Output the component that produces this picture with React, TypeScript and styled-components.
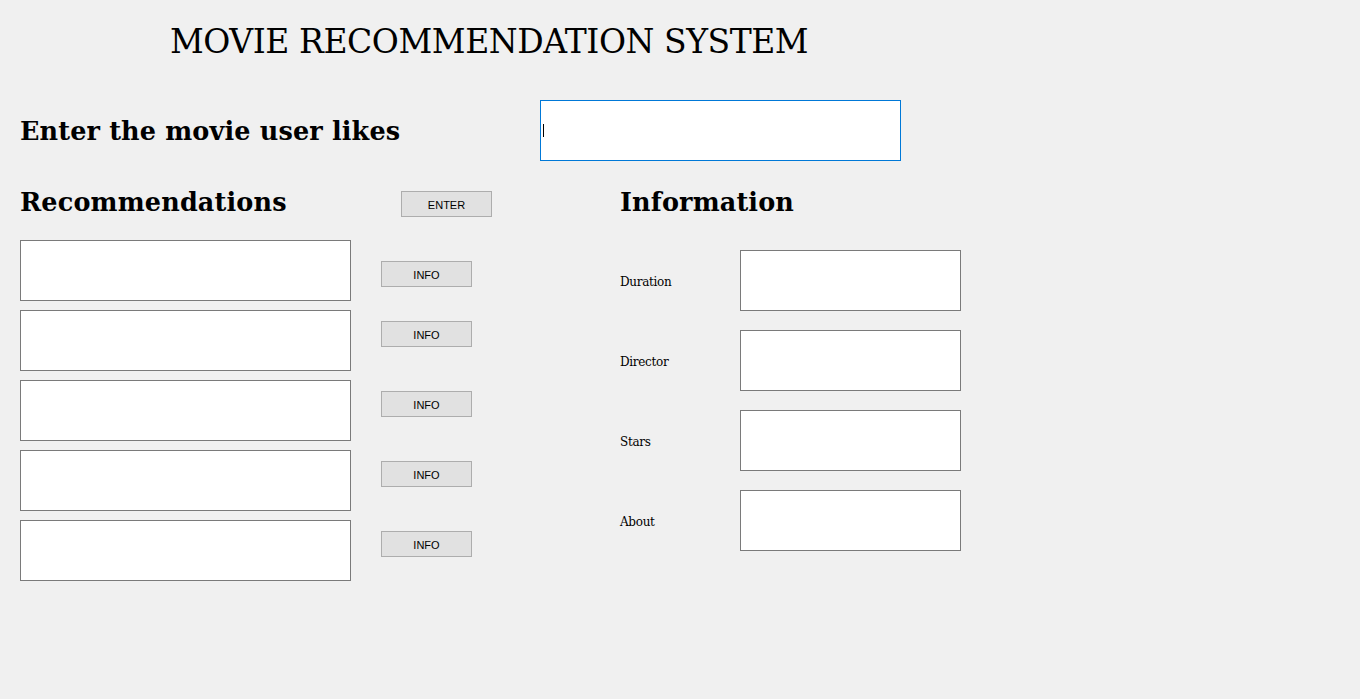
import styled, { createGlobalStyle } from "styled-components";

const GlobalStyle = createGlobalStyle`
  html, body {
    margin: 0;
    padding: 0;
    background: #f0f0f0;
  }
  body {
    width: 1360px;
    height: 699px;
    overflow: hidden;
    font-family: "DejaVu Serif", "Liberation Serif", serif;
    color: #000;
  }
`;

const Form = styled.div`
  width: 1360px;
  height: 699px;
  background: #f0f0f0;
  box-sizing: border-box;
  padding: 20px 0 0 20px;
`;

const Title = styled.h1`
  margin: 0 0 0 150px;
  height: 44px;
  font-family: "DejaVu Serif", serif;
  font-weight: normal;
  font-size: 33px;
  line-height: 44px;
  letter-spacing: -0.45px;
`;

const QueryRow = styled.div`
  display: flex;
  align-items: center;
  margin-top: 36px;
`;

const Heading = styled.h2<{ $width?: number }>`
  margin: 0;
  width: ${(p) => (p.$width ? `${p.$width}px` : "auto")};
  font-family: "DejaVu Serif", serif;
  font-weight: bold;
  font-size: 25.5px;
  line-height: 30px;
  letter-spacing: 0.15px;
  white-space: nowrap;
`;

const QueryBox = styled.div`
  width: 361px;
  height: 61px;
  box-sizing: border-box;
  border: 1px solid #0078d7;
  background: #fff;
  display: flex;
  align-items: center;
  padding-left: 2px;
`;

const Caret = styled.span`
  display: block;
  width: 1px;
  height: 13px;
  background: #000;
`;

const Columns = styled.div`
  display: flex;
  margin-top: 30px;
`;

const LeftColumn = styled.div`
  width: 600px;
  display: flex;
  flex-direction: column;
`;

const RightColumn = styled.div`
  display: flex;
  flex-direction: column;
`;

const HeadRow = styled.div`
  display: flex;
  align-items: center;
  height: 26px;

  & > h2 {
    margin-bottom: 4px;
  }
`;

const WinButton = styled.button<{ $offset?: number }>`
  width: 91px;
  height: 26px;
  margin: ${(p) => p.$offset ?? 0}px 0 0 0;
  padding: 2px 0 0 0;
  box-sizing: border-box;
  background: #e1e1e1;
  border: 1px solid #adadad;
  font-family: "Liberation Sans", Arial, sans-serif;
  font-size: 11px;
  color: #000;
  align-self: flex-start;
`;

const RecList = styled.div`
  display: flex;
  flex-direction: column;
  gap: 9px;
  margin-top: 23px;
`;

const RecRow = styled.div`
  display: flex;
  gap: 30px;
`;

const TextBox = styled.div<{ $w: number }>`
  width: ${(p) => p.$w}px;
  height: 61px;
  box-sizing: border-box;
  border: 1px solid #7a7a7a;
  background: #fff;
`;

const InfoList = styled.div`
  display: flex;
  flex-direction: column;
  gap: 19px;
  margin-top: 33px;
`;

const InfoRow = styled.div`
  display: flex;
  align-items: center;
`;

const InfoLabel = styled.span`
  width: 120px;
  padding-top: 2px;
  font-family: "DejaVu Serif", serif;
  font-size: 12px;
  letter-spacing: -0.3px;
`;

const recOffsets = [21, 11, 11, 11, 11];
const infoFields = ["Duration", "Director", "Stars", "About"];

const App: React.FC = () => {
  return (
    <Form>
      <GlobalStyle />
      <Title>MOVIE RECOMMENDATION SYSTEM</Title>
      <QueryRow>
        <Heading $width={520}>Enter the movie user likes</Heading>
        <QueryBox>
          <Caret />
        </QueryBox>
      </QueryRow>
      <Columns>
        <LeftColumn>
          <HeadRow>
            <Heading $width={381}>Recommendations</Heading>
            <WinButton>ENTER</WinButton>
          </HeadRow>
          <RecList>
            {recOffsets.map((off, i) => (
              <RecRow key={i}>
                <TextBox $w={331} />
                <WinButton $offset={off}>INFO</WinButton>
              </RecRow>
            ))}
          </RecList>
        </LeftColumn>
        <RightColumn>
          <HeadRow>
            <Heading>Information</Heading>
          </HeadRow>
          <InfoList>
            {infoFields.map((f) => (
              <InfoRow key={f}>
                <InfoLabel>{f}</InfoLabel>
                <TextBox $w={221} />
              </InfoRow>
            ))}
          </InfoList>
        </RightColumn>
      </Columns>
    </Form>
  );
};

export default App;
